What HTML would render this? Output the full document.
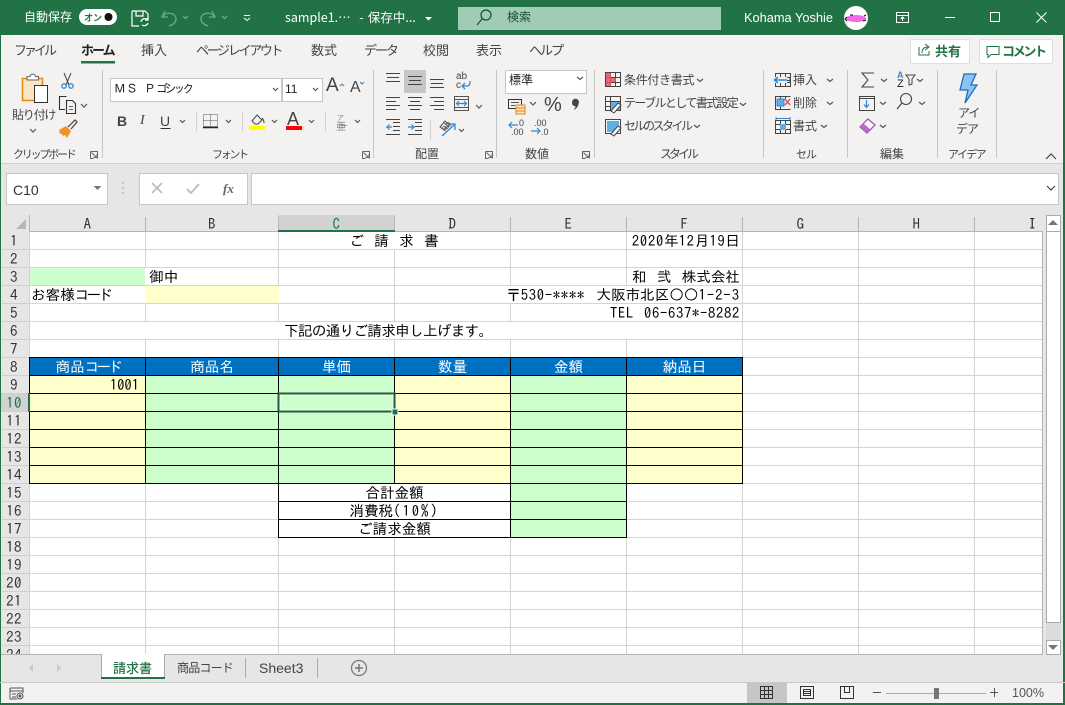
<!DOCTYPE html>
<html lang="ja"><head><meta charset="utf-8"><title>sample1</title>
<style>
html,body{margin:0;padding:0;background:#e6e6e6}
#p{position:relative;width:1065px;height:705px;overflow:hidden;background:#e6e6e6;font-family:"Liberation Sans","Noto Sans CJK JP",sans-serif}
#p div{position:absolute}
.t{white-space:nowrap;font-size:12px;line-height:16px;color:#444;font-family:"Noto Sans CJK JP",sans-serif}
.tb{font-size:13px}
.w{color:#fff}
.c{white-space:pre;font-family:"IPAGothic","Noto Sans CJK JP",monospace;font-size:14.6px;line-height:18px;height:18px;color:#000}
.h{white-space:nowrap;font-family:"IPAGothic","Noto Sans CJK JP",monospace;font-size:15px;line-height:18px;height:18px;color:#333;text-align:center;letter-spacing:.4px}
.ctr{text-align:center}.r{text-align:right}
.d{letter-spacing:.75px}.k{letter-spacing:-3px}
svg{position:absolute;left:0;top:0}
.ch{fill:none;stroke:#555;stroke-width:1.2}
</style></head><body><div id="p">
<div style="left:0;top:0;width:1065px;height:35px;background:#217346"></div>
<div style="left:0;top:35px;width:1065px;height:128px;background:#f3f2f1;border-bottom:1px solid #d2d0ce"></div>
<div style="left:458px;top:7px;width:263px;height:23px;background:#a0cbb4"></div>
<div style="left:0;top:215px;width:1065px;height:17px;background:#e6e6e6"></div>
<div style="left:0;top:232px;width:29px;height:423px;background:#e6e6e6"></div>
<div style="left:30px;top:232px;width:1012px;height:422px;background:#fff"></div>
<div style="left:6px;top:173px;width:100px;height:30px;background:#fff;border:1px solid #c6c6c6"></div>
<div style="left:139px;top:173px;width:107px;height:30px;background:#fff;border:1px solid #c6c6c6"></div>
<div style="left:251px;top:173px;width:806px;height:30px;background:#fff;border:1px solid #c6c6c6"></div>
<div style="left:278px;top:215px;width:117px;height:17px;background:#d2d2d2"></div>
<div style="left:0;top:393px;width:29px;height:18px;background:#d2d2d2"></div>
<div style="left:0;top:683px;width:1065px;height:20px;background:#f3f2f1"></div>
<div style="left:747px;top:683px;width:40px;height:20px;background:#c8c6c4"></div>
<div style="left:101px;top:654px;width:64px;height:25px;background:#fff"></div>
<div style="left:404px;top:70px;width:22px;height:23px;background:#c8c6c4"></div>
<div style="left:110px;top:78px;width:170px;height:22px;background:#fff;border:1px solid #c8c6c4"></div>
<div style="left:282px;top:78px;width:39px;height:22px;background:#fff;border:1px solid #c8c6c4"></div>
<div style="left:505px;top:70px;width:80px;height:22px;background:#fff;border:1px solid #c8c6c4"></div>
<div style="left:910px;top:39px;width:58px;height:23px;background:#fff;border:1px solid #e1dfdd;border-radius:2px"></div>
<div style="left:979px;top:39px;width:72px;height:23px;background:#fff;border:1px solid #e1dfdd;border-radius:2px"></div>
<div style="left:1046px;top:215px;width:15px;height:440px;background:#dcdcdc"></div>
<div style="left:1046px;top:215px;width:13px;height:15px;background:#fff;border:1px solid #ababab"></div>
<div style="left:1046px;top:231px;width:13px;height:390px;background:#fff;border:1px solid #ababab"></div>
<div style="left:1046px;top:640px;width:13px;height:13px;background:#fff;border:1px solid #ababab"></div>

<!-- sheet fills -->
<div style="left:30px;top:267px;width:115px;height:18px;background:#ccffcc"></div>
<div style="left:145px;top:285px;width:134px;height:18px;background:#ffffcc"></div>
<div style="left:29px;top:357px;width:714px;height:18px;background:#0070c0"></div>
<div style="left:29px;top:375px;width:116px;height:108px;background:#ffffcc"></div>
<div style="left:145px;top:375px;width:249px;height:108px;background:#ccffcc"></div>
<div style="left:394px;top:375px;width:116px;height:108px;background:#ffffcc"></div>
<div style="left:510px;top:375px;width:116px;height:162px;background:#ccffcc"></div>
<div style="left:626px;top:375px;width:117px;height:108px;background:#ffffcc"></div>

<svg width="1065" height="705" viewBox="0 0 1065 705" fill="none" shape-rendering="auto">
<g stroke="#d4d4d4" shape-rendering="crispEdges">
<path d="M29.5 232V654M858.5 232V654M974.5 232V654M742.5 232V654"/>
<path d="M145.5 232V267M145.5 303V321M145.5 339V357M145.5 483V654M278.5 232V285M278.5 303V321M278.5 339V357M278.5 537V654"/>
<path d="M394.5 249V321M394.5 339V357M394.5 537V654M510.5 232V285M510.5 303V321M510.5 339V357M510.5 537V654M626.5 232V285M626.5 339V357M626.5 537V654"/>
<path d="M30 249.500H1042M30 267.500H1042M30 285.500H1042M30 303.500H1042M30 321.500H1042M30 339.500H1042M743 357.500H1042M743 375.500H1042M743 393.500H1042M743 411.500H1042M743 429.500H1042M743 447.500H1042M743 465.500H1042M30 483.500H278M743 483.500H1042M30 501.500H278M627 501.500H1042M30 519.500H278M627 519.500H1042M30 537.500H1042M30 555.500H1042M30 573.500H1042M30 591.500H1042M30 609.500H1042M30 627.500H1042M30 645.500H1042"/>
</g>
<g stroke="#000" shape-rendering="crispEdges">
<path d="M29 357.500H743M29 375.500H743M29 393.500H743M29 411.500H743M29 429.500H743M29 447.500H743M29 465.500H743M29 483.500H743M278 501.500H627M278 519.500H627M278 537.500H627"/>
<path d="M29.500 357V484M145.500 357V484M278.500 357V538M394.500 357V484M510.500 357V538M626.500 357V538M742.500 357V484"/>
</g>
<!-- header lines -->
<g stroke="#b5b5b5" shape-rendering="crispEdges">
<path d="M29.500 215V232M145.500 217V231M278.500 217V231M394.500 217V231M510.500 217V231M626.500 217V231M742.500 217V231M858.500 217V231M974.500 217V231"/>
<path d="M29 231.500H1043M1042.500 232V654"/>
<path d="M0 654.500H101M165 654.500H1043"/>
<path d="M2 249.500H29M2 267.500H29M2 285.500H29M2 303.500H29M2 321.500H29M2 339.500H29M2 357.500H29M2 375.500H29M2 393.500H29M2 411.500H29M2 429.500H29M2 447.500H29M2 465.500H29M2 483.500H29M2 501.500H29M2 519.500H29M2 537.500H29M2 555.500H29M2 573.500H29M2 591.500H29M2 609.500H29M2 627.500H29M2 645.500H29" stroke="#cfcfcf"/>
</g>
<path d="M278 231H395" stroke="#217346" stroke-width="2" shape-rendering="crispEdges"/>
<path d="M29 393V412" stroke="#217346" stroke-width="2" shape-rendering="crispEdges"/>
<path d="M16 229h10v-10z" fill="#b8b8b8"/>
<!-- selection -->
<rect x="278.500" y="393.500" width="116" height="18" stroke="#1c5f3a" stroke-width="2" shape-rendering="crispEdges"/>
<rect x="280" y="395" width="113" height="15" stroke="#fff" stroke-width="1" shape-rendering="crispEdges"/>
<rect x="392" y="409" width="6" height="6" fill="#217346" stroke="#fff"/>

<!-- window border -->
<path d="M0 35V705M1064 35V705" stroke="#217346" stroke-width="2" shape-rendering="crispEdges"/>
<path d="M0 704H1065" stroke="#217346" stroke-width="2" shape-rendering="crispEdges"/>

<!-- title bar -->
<rect x="79" y="9" width="38" height="16" rx="8" fill="#fff"/>
<circle cx="108.500" cy="17" r="4" fill="#111"/>
<g stroke="#fff" stroke-width="1.200">
<path d="M132 11h13l3 3v6M132 11v15h7"/><path d="M136 11v5h7v-5"/>
<path d="M141 22a4 4 0 0 1 7-2M148 17v3h-3M148 23a4 4 0 0 1-6 2"/>
</g>
<g stroke="#6fa98a" stroke-width="1.300">
<path d="M165 11l-3 6h6M163 16c4-5 13-3 13 3 0 4-4 6-7 7"/><path d="M183 16l2.500 2.500 2.500-2.500"/>
<path d="M212 11l3 6h-6M214 16c-4-5-13-3-13 3 0 4 4 6 7 7"/><path d="M222 16l2.500 2.500 2.500-2.500"/>
</g>
<path d="M244 15.500h6M244 18l3 2.500 3-2.500" stroke="#fff" stroke-width="1"/>
<path d="M425 17h7l-3.500 3.500z" fill="#fff"/>
<g stroke="#174f31" stroke-width="1.200"><circle cx="486" cy="15" r="5"/><path d="M482 19l-5 6"/></g>
<circle cx="856" cy="18" r="12" fill="#fff"/>
<ellipse cx="856" cy="18.500" rx="10" ry="3.500" fill="#f06be8"/><path d="M847 17l-2 2 2 2M850 15h3M864 16l2-1M866 20l-3 1" stroke="#111"/>
<g stroke="#fff" stroke-width="1" shape-rendering="crispEdges">
<path d="M896.500 12.500h12v10h-12zM896 15.500h13"/><path d="M902.500 21V17M900.500 19l2-2 2 2"/>
<path d="M945 17.500h10"/><rect x="990.500" y="12.500" width="9" height="9"/>
</g>
<path d="M1036.500 12.500l10 10M1046.500 12.500l-10 10" stroke="#fff" stroke-width="1"/>

<!-- tab underline -->
<rect x="81" y="61" width="34" height="2.500" fill="#217346"/>
<g stroke="#217346" stroke-width="1">
<path d="M919 47v8h10v-4M922 53c0-4 2-6 6-6M925 44l4 3-4 3"/>
<path d="M987 46.500h12v8h-8l-3 3v-3h-1z"/>
</g>

<!-- group separators -->
<path d="M102.500 70V158M373.500 70V158M496.500 70V158M594.500 70V158M763.500 70V158M847.500 70V158M937.500 70V158M996.500 70V158" stroke="#c8c6c4" shape-rendering="crispEdges"/>
<path d="M196.500 112V132M242.500 112V132M325.500 112V132M430.500 120V140" stroke="#d2d0ce" shape-rendering="crispEdges"/>

<!-- launchers -->
<g stroke="#666" stroke-width="1">
<path d="M90.500 151.500h7v7M90.500 151.500v7h3M91.500 152.500l5 5M97 154v3.500h-3.500"/>
<path d="M362.500 151.500h7v7M362.500 151.500v7h3M363.500 152.500l5 5M369 154v3.500h-3.500"/>
<path d="M485.500 151.500h7v7M485.500 151.500v7h3M486.500 152.500l5 5M492 154v3.500h-3.500"/>
<path d="M582.500 151.500h7v7M582.500 151.500v7h3M583.500 152.500l5 5M589 154v3.500h-3.500"/>
</g>
<path d="M1046 159l5-5 5 5" stroke="#444" stroke-width="1.200"/>

<!-- clipboard -->
<path d="M22.500 78.500h20v22h-20z" fill="#fbe5c3" stroke="#e08a14" stroke-width="1.500"/>
<path d="M27 78.500v-2h3c.5-3 5-3 5.500 0h3v3.500h-11.500z" fill="#fff" stroke="#666"/>
<rect x="34.500" y="85.500" width="13" height="17" fill="#fff" stroke="#333"/>
<path d="M30 129l3 3 3-3M81 104l3 3 3-3" class="ch"/>
<g stroke="#444"><path d="M64 73l5 12M71 73l-5 12"/></g>
<g stroke="#2b88d8" stroke-width="1.300"><circle cx="64" cy="86" r="2.200"/><circle cx="71" cy="86" r="2.200"/></g>
<path d="M65 109.500h-5.500v-13h7M66.500 100.500h6l3 3v10h-9z" stroke="#333" stroke-width="1.100"/><path d="M69 106.500h4M69 109.500h4" stroke="#666"/>
<path d="M59 130l7-4 5 5-4 7-2-3-2 1-1-2-2 0z" fill="#f0922b"/><path d="M68 127l7-7 2 2-6 7" stroke="#444" stroke-width="1.200"/>

<!-- font group -->
<g class="ch">
<path d="M273 88l2.500 2.500 2.500-2.500M313 88l2.500 2.500 2.500-2.500M180 120l2.500 2.500 2.500-2.500M226 120l2.500 2.500 2.500-2.500M272 120l2.500 2.500 2.500-2.500M309 120l2.500 2.500 2.500-2.500M355 120l2.500 2.500 2.500-2.500"/>
</g>
<path d="M340 86l2-2 2 2M360 82l2 2 2-2" stroke="#2b88d8" stroke-width="1"/>
<path d="M160.500 128.500h10" stroke="#333"/>
<path d="M203.500 114.500h14v12h-14zM210.500 114.500v12M203.500 120.500h14" stroke="#555" stroke-dasharray="1 1" shape-rendering="crispEdges"/><path d="M203 127.500h15" stroke="#222" stroke-width="1.500"/>
<rect x="249" y="126" width="16" height="4" fill="#ffff00"/>
<path d="M252 121l5-6 5 5-4 4h-3z" stroke="#444"/><path d="M262 118c2 2 2 4 2 5" stroke="#444"/>
<rect x="286" y="126" width="16" height="4" fill="#ff0000"/>
<path d="M339 125.500h8" stroke="#999"/>

<!-- align -->
<g stroke="#444" shape-rendering="crispEdges">
<path d="M386 73.500h14M387 77.500h12M386 81.500h14"/>
<path d="M408 76.500h14M409 80.500h12M408 84.500h14"/>
<path d="M430 79.500h14M431 83.500h12M430 87.500h14"/>
<path d="M386 98.500h14M386 102.500h10M386 106.500h14M386 110.500h10" transform="translate(0,-1)"/>
<path d="M408 97.500h14M410 101.500h10M408 105.500h14M410 109.500h10"/>
<path d="M430 97.500h14M434 101.500h10M430 105.500h14M434 109.500h10"/>
<path d="M393 122.500h7M393 126.500h7M393 130.500h7M386 134.500h14M386 119.500h14"/>
<path d="M415 122.500h7M415 126.500h7M415 130.500h7M408 134.500h14M408 119.500h14"/>
</g>
<path d="M392 127h-5l2.500-2.500M387 127l2.500 2.500M408 127h6l-2.500-2.500M414 127l-2.500 2.500" stroke="#2b88d8" stroke-width="1.200"/>
<path d="M470 81v2a3 3 0 0 1-3 3h-4M465 83l-3 3 3 3" stroke="#2b88d8" stroke-width="1.300"/>
<rect x="454.500" y="96.500" width="14" height="14" stroke="#555"/><path d="M454 99.500h15M454 107.500h15" stroke="#555"/><path d="M457 103.500h9M459 101l-2.500 2.500 2.500 2.500M464 101l2.500 2.500-2.500 2.500" stroke="#2b88d8" stroke-width="1.200"/>
<path d="M476 105l3 3 3-3M459 129l2.500 2.500 2.500-2.500M530 102l3 3 3-3M697 79l3 2.500 3-2.500M740 103l3 2.500 3-2.500M694 125l3 2.500 3-2.500M827 79l3 2.500 3-2.500M827 102l3 2.500 3-2.500M821 125l3 2.500 3-2.500M881 79l3 2.500 3-2.500M917 79l3 2.500 3-2.500M880 102l3 2.500 3-2.500M919 102l3 2.500 3-2.500M880 125l3 2.500 3-2.500M577 77l3 2.500 3-2.500" class="ch"/>
<path d="M442 136l12-11M449 124l6 0 0 6" stroke="#2b88d8" stroke-width="1.300"/>
<path d="M440 127l5-6 4 4-5 5z" stroke="#555"/>

<!-- number -->
<rect x="508.500" y="99.500" width="13" height="9" stroke="#333"/>
<path d="M511 102.500h8M511 105.500h4" stroke="#555"/><path d="M516 105h9v9h-9z" fill="#f8e3c8" stroke="#e08a14"/><path d="M516 108h9M516 111h9" stroke="#e08a14"/>
<path d="M518 125h-9M512 122l-3 3 3 3M531 131h9M537 128l3 3-3 3" stroke="#2b88d8" stroke-width="1.200"/>
<path d="M572 102a3.500 3.500 0 1 1 6.500 2c-.5 3-2.500 5-5 6 1.500-1.500 2-3 2-4-2 .5-3.500-1-3.500-4z" fill="#444"/>

<!-- style icons -->
<g stroke="#444" shape-rendering="crispEdges">
<rect x="605.500" y="72.500" width="15" height="14"/><path d="M610.500 72v15M615.500 72v15M605 77.500h16M605 82.500h16"/>
<rect x="605.500" y="96.500" width="15" height="14"/><path d="M610.500 96v15M605 101.500h16M605 106.500h16"/>
<rect x="605.500" y="119.500" width="15" height="14"/>
</g>
<path d="M606 73h5v5h5v4h-5v4h-5z" fill="#e8525a" opacity=".85"/>
<path d="M611 102h9v8h-9z" fill="#62aee6"/><path d="M607 121h12v11h-12z" fill="#62aee6"/>
<path d="M611 111l7-8 3 2-7 8zM611 134l7-8 3 2-7 8z" fill="#fff" stroke="#444"/>

<!-- cells -->
<g stroke="#444" shape-rendering="crispEdges">
<rect x="775.500" y="73.500" width="15" height="13"/><path d="M780.500 73v14M785.500 73v14M775 80.500h16"/>
<path d="M775.500 96.500h15M775.500 109.500h15M775.500 96v14M780.500 96v14M785.500 96v3"/>
<rect x="775.500" y="120.500" width="15" height="13"/><path d="M780.500 120v14M785.500 120v14M775 124.500h16M775 129.500h16"/>
</g>
<path d="M773 77h14v6h-14z" fill="#f3f2f1"/><path d="M787 80h-13M778 77l-3.500 3 3.500 3" stroke="#2b88d8" stroke-width="1.500"/><path d="M787 77.500h3v5h-3" stroke="#444"/>
<rect x="777" y="99" width="7" height="7" fill="#62aee6" stroke="#2b88d8"/><path d="M785 99l5 6M790 99l-5 6" stroke="#e8525a" stroke-width="1.500"/>
<rect x="780" y="124" width="6" height="6" fill="#62aee6"/><path d="M776 118.500h14M776 117v3M790 117v3" stroke="#2b88d8"/>

<!-- edit -->
<path d="M874 73h-12l6 7-6 7h12" stroke="#444" stroke-width="1.100"/>
<path d="M906 75h9l-3 4v5l-3 1v-6z" stroke="#444"/>
<rect x="859.500" y="96.500" width="15" height="14" stroke="#444" shape-rendering="crispEdges"/><path d="M859 98.500h16" stroke="#444"/><path d="M866.500 100v7M864 104.500l2.500 3 2.500-3" stroke="#2b88d8" stroke-width="1.200"/>
<circle cx="906" cy="99" r="5.500" stroke="#444" stroke-width="1.100"/><path d="M902 103l-5 6" stroke="#444" stroke-width="1.200"/>
<path d="M860 127l8-8 7 6-8 8z" fill="#fff" stroke="#a347b8" stroke-width="1.200"/><path d="M860 127l3.500-3.500 7 6-3.500 3.500z" fill="#b86bcb"/>
<path d="M964 74h12l-5 11h6l-12 18 3-13h-8z" fill="#8cc3f0" stroke="#1b6ec2" stroke-width="1.300"/>

<!-- formula bar -->
<path d="M93.500 186h8l-4 4z" fill="#777"/>
<path d="M123 182v1.500M123 187v1.500M123 192v1.500" stroke="#aaa" stroke-width="1.500"/>
<path d="M152 183l10 10M162 183l-10 10" stroke="#bbb" stroke-width="1.600"/>
<path d="M187 189l4 4 8-9" stroke="#bbb" stroke-width="1.800"/>
<path d="M1047 186l4 4 4-4" stroke="#444" stroke-width="1.200"/>
<path d="M1049 225h10l-5-5z" fill="#777" transform="translate(-1 0)"/><path d="M1048 645h10l-5 5z" fill="#777"/>

<!-- sheet tabs -->
<rect x="101" y="677" width="64" height="2" fill="#217346"/>
<path d="M101.500 654v23M164.500 654v23" stroke="#aaa" shape-rendering="crispEdges"/>
<path d="M245.500 658v20M317.500 658v20" stroke="#aaa" shape-rendering="crispEdges"/>
<path d="M33 664l-4 4 4 4zM57 664l4 4-4 4z" fill="#c8c8c8"/>
<circle cx="359" cy="668" r="7.500" stroke="#777" stroke-width="1.200"/><path d="M355 668h8M359 664v8" stroke="#777" stroke-width="1.500"/>
<path d="M0 682.500H1065" stroke="#c8c8c8" shape-rendering="crispEdges"/>

<!-- status -->
<path d="M10 688h13v5M10 688v11h7M10 691h13M12 694h4M12 697h4" stroke="#555"/><circle cx="20" cy="696" r="3" stroke="#555"/><circle cx="20" cy="696" r="1.500" fill="#555"/>
<g stroke="#333" shape-rendering="crispEdges">
<rect x="760.500" y="686.500" width="12" height="12"/><path d="M764.500 686v13M768.500 686v13M760 690.500h13M760 694.500h13"/>
<rect x="800.500" y="686.500" width="13" height="12"/><rect x="803.500" y="689.500" width="7" height="6"/><path d="M804 691.500h6M804 693.500h6"/>
<path d="M840.500 686.500h13v12h-13zM844.500 686v7M849.500 686v7M844.500 692.500h5"/>
<path d="M873 692.500h8M990 692.500h8M994.500 688v9" stroke="#555"/>
<path d="M886 693.500h100" stroke="#aaa"/>
</g>
<rect x="934" y="688" width="5" height="11" fill="#777"/>
</svg>

<!-- title text -->
<div class="t w" style="left:24px;top:9px;font-size:12px">自動保存</div>
<div class="t" style="left:84px;top:10px;font-size:9px;color:#217346;font-weight:700">オン</div>
<div class="t w" style="left:285px;top:9px;font-size:12.500px;word-spacing:1.500px">sample1.⋯&nbsp; - 保存中... </div>
<div class="t" style="left:507px;top:9px;font-size:12px;color:#174f31">検索</div>
<div class="t w" style="left:744px;top:10px;font-size:12.800px;font-family:'Liberation Sans',sans-serif">Kohama Yoshie</div>

<!-- tabs -->
<div class="t tb" style="left:14px;top:42px;letter-spacing:-3px">ファイル</div>
<div class="t tb" style="left:81px;top:42px;font-weight:700;color:#222;letter-spacing:-2px">ホーム</div>
<div class="t tb" style="left:141px;top:42px">挿入</div>
<div class="t tb" style="left:196px;top:42px;letter-spacing:-2.400px">ページ レイアウト</div>
<div class="t tb" style="left:311px;top:42px">数式</div>
<div class="t tb" style="left:364px;top:42px;letter-spacing:-2px">データ</div>
<div class="t tb" style="left:423px;top:42px">校閲</div>
<div class="t tb" style="left:476px;top:42px">表示</div>
<div class="t tb" style="left:529px;top:42px;letter-spacing:-2px">ヘルプ</div>
<div class="t tb" style="left:935px;top:43px;font-weight:700;color:#217346">共有</div>
<div class="t tb" style="left:1002px;top:43px;font-weight:700;color:#217346;letter-spacing:-2.300px">コメント</div>

<!-- ribbon text -->
<div class="t" style="left:12px;top:107px;letter-spacing:-1.200px">貼り付け</div>
<div class="t" style="left:114px;top:81px;font-family:'IPAGothic','Noto Sans CJK JP',sans-serif;color:#222">ＭＳ Ｐ<span style="letter-spacing:-3.200px">ゴシック</span></div>
<div class="t" style="left:285px;top:81px;color:#222;font-family:'Liberation Sans',sans-serif">11</div>
<div class="t" style="left:326px;top:78px;font-size:19px;font-family:'Liberation Sans',sans-serif">A</div>
<div class="t" style="left:350px;top:80px;font-size:16px;font-family:'Liberation Sans',sans-serif">A</div>
<div class="t" style="left:117px;top:113px;font-size:14px;font-weight:700;font-family:'Liberation Sans',sans-serif">B</div>
<div class="t" style="left:140px;top:113px;font-size:14px;font-style:italic;font-family:'Liberation Serif',serif">I</div>
<div class="t" style="left:160px;top:113px;font-size:14px;font-family:'Liberation Sans',sans-serif">U</div>
<div class="t" style="left:287px;top:111px;font-size:18px;font-family:'Liberation Sans',sans-serif">A</div>
<div class="t" style="left:337px;top:110px;font-size:7px;color:#888">ア</div>
<div class="t" style="left:336px;top:118px;font-size:10px;color:#888">亜</div>
<div class="t" style="left:456px;top:72px;font-size:10px;line-height:10px;font-family:'Liberation Sans',sans-serif">ab</div>
<div class="t" style="left:456px;top:81px;font-size:10px;line-height:10px;font-family:'Liberation Sans',sans-serif">c</div>
<div class="t" style="left:441px;top:118px;font-size:9px;transform:rotate(-45deg);font-family:'Liberation Sans',sans-serif">ab</div>
<div class="t" style="left:509px;top:72px;color:#222">標準</div>
<div class="t" style="left:544px;top:95px;font-size:20px;line-height:20px;font-family:'Liberation Sans',sans-serif">%</div>
<div class="t" style="left:519px;top:119px;font-size:9px;line-height:9px;font-family:'Liberation Sans',sans-serif">0</div>
<div class="t" style="left:511px;top:128px;font-size:9px;line-height:9px;font-family:'Liberation Sans',sans-serif">.00</div>
<div class="t" style="left:534px;top:119px;font-size:9px;line-height:9px;font-family:'Liberation Sans',sans-serif">.00</div>
<div class="t" style="left:541px;top:128px;font-size:9px;line-height:9px;font-family:'Liberation Sans',sans-serif">.0</div>
<div class="t" style="left:624px;top:72px;letter-spacing:-.3px">条件付き書式</div>
<div class="t" style="left:624px;top:95px;letter-spacing:-1.600px">テーブルとして書式設定</div>
<div class="t" style="left:624px;top:118px;letter-spacing:-2.500px">セルのスタイル</div>
<div class="t" style="left:793px;top:72px">挿入</div>
<div class="t" style="left:793px;top:95px">削除</div>
<div class="t" style="left:793px;top:118px">書式</div>
<div class="t" style="left:897px;top:70px;font-size:9px;line-height:10px;color:#2b88d8;font-weight:700;font-family:'Liberation Sans',sans-serif">A</div>
<div class="t" style="left:897px;top:79px;font-size:11px;line-height:10px;color:#222;font-family:'Liberation Sans',sans-serif">Z</div>
<div class="t" style="left:958px;top:105px;letter-spacing:-1px">アイ</div>
<div class="t" style="left:956px;top:121px;letter-spacing:-1px">デア</div>
<div class="t" style="left:13px;top:146px;font-size:11px;letter-spacing:-2.200px">クリップボード</div>
<div class="t" style="left:212px;top:146px;font-size:11px;letter-spacing:-2.300px">フォント</div>
<div class="t" style="left:415px;top:146px">配置</div>
<div class="t" style="left:525px;top:146px">数値</div>
<div class="t" style="left:660px;top:146px;letter-spacing:-3px">スタイル</div>
<div class="t" style="left:796px;top:146px;font-size:11px;letter-spacing:-1px">セル</div>
<div class="t" style="left:880px;top:146px">編集</div>
<div class="t" style="left:948px;top:146px;font-size:11px;letter-spacing:-1.600px">アイデア</div>

<!-- formula -->
<div class="t" style="left:13px;top:182px;font-size:14px;color:#333;font-family:'Liberation Sans',sans-serif">C10</div>
<div class="t" style="left:223px;top:181px;font-size:13px;font-style:italic;font-weight:700;color:#666;font-family:'Liberation Serif',serif">fx</div>

<!-- col headers -->
<div class="h" style="left:30px;top:215px;width:115px">A</div>
<div class="h" style="left:146px;top:215px;width:132px">B</div>
<div class="h" style="left:279px;top:215px;width:115px;color:#217346">C</div>
<div class="h" style="left:395px;top:215px;width:115px">D</div>
<div class="h" style="left:511px;top:215px;width:115px">E</div>
<div class="h" style="left:627px;top:215px;width:115px">F</div>
<div class="h" style="left:743px;top:215px;width:115px">G</div>
<div class="h" style="left:859px;top:215px;width:115px">H</div>
<div class="h" style="left:975px;top:215px;width:115px">I</div>
<!-- row headers -->
<div class="h" style="left:0;top:232px;width:28px">1</div>
<div class="h" style="left:0;top:250px;width:28px">2</div>
<div class="h" style="left:0;top:268px;width:28px">3</div>
<div class="h" style="left:0;top:286px;width:28px">4</div>
<div class="h" style="left:0;top:304px;width:28px">5</div>
<div class="h" style="left:0;top:322px;width:28px">6</div>
<div class="h" style="left:0;top:340px;width:28px">7</div>
<div class="h" style="left:0;top:358px;width:28px">8</div>
<div class="h" style="left:0;top:376px;width:28px">9</div>
<div class="h" style="left:0;top:394px;width:28px;color:#217346">10</div>
<div class="h" style="left:0;top:412px;width:28px">11</div>
<div class="h" style="left:0;top:430px;width:28px">12</div>
<div class="h" style="left:0;top:448px;width:28px">13</div>
<div class="h" style="left:0;top:466px;width:28px">14</div>
<div class="h" style="left:0;top:484px;width:28px">15</div>
<div class="h" style="left:0;top:502px;width:28px">16</div>
<div class="h" style="left:0;top:520px;width:28px">17</div>
<div class="h" style="left:0;top:538px;width:28px">18</div>
<div class="h" style="left:0;top:556px;width:28px">19</div>
<div class="h" style="left:0;top:574px;width:28px">20</div>
<div class="h" style="left:0;top:592px;width:28px">21</div>
<div class="h" style="left:0;top:610px;width:28px">22</div>
<div class="h" style="left:0;top:628px;width:28px">23</div>
<div style="left:0;top:646px;width:28px;height:8px;overflow:hidden"><div class="h" style="left:0;top:0;width:28px">24</div></div>

<!-- cells -->
<div class="c ctr" style="left:278px;top:232px;width:232px;word-spacing:3px">ご 請 求 書</div>
<div class="c r" style="left:600px;top:232px;width:140px"><span class="d">2020</span>年<span class="d">12</span>月<span class="d">19</span>日</div>
<div class="c" style="left:149px;top:268px">御中</div>
<div class="c r" style="left:600px;top:268px;width:140px;word-spacing:3px">和 弐 株式会社</div>
<div class="c" style="left:31px;top:286px">お客様<span class="k">コード</span></div>
<div class="c r" style="left:440px;top:286px;width:300px;word-spacing:4px">〒<span class="d">530-****</span> 大阪市北区○○<span style="letter-spacing:1px">1-2-3</span></div>
<div class="c r" style="left:560px;top:304px;width:180px;letter-spacing:.7px;word-spacing:2px">TEL 06-637*-8282</div>
<div class="c" style="left:284px;top:322px;letter-spacing:-.7px">下記の通りご請求申し上げます。</div>
<div class="c ctr" style="left:30px;top:358px;width:115px;color:#fff">商品<span class="k">コード</span></div>
<div class="c ctr" style="left:146px;top:358px;width:132px;color:#fff">商品名</div>
<div class="c ctr" style="left:279px;top:358px;width:115px;color:#fff">単価</div>
<div class="c ctr" style="left:395px;top:358px;width:115px;color:#fff">数量</div>
<div class="c ctr" style="left:511px;top:358px;width:115px;color:#fff">金額</div>
<div class="c ctr" style="left:627px;top:358px;width:115px;color:#fff">納品日</div>
<div class="c r" style="left:80px;top:376px;width:59px">1001</div>
<div class="c ctr" style="left:279px;top:484px;width:231px">合計金額</div>
<div class="c ctr" style="left:279px;top:502px;width:231px">消費税<span style="letter-spacing:2px">(10%)</span></div>
<div class="c ctr" style="left:279px;top:520px;width:231px">ご請求金額</div>

<!-- sheet tabs -->
<div class="t" style="left:113px;top:660px;font-size:13px;color:#217346;font-weight:500">請求書</div>
<div class="t" style="left:177px;top:660px;font-size:12px;letter-spacing:-.8px">商品コード</div>
<div class="t" style="left:259px;top:660px;font-size:14px;font-family:'Liberation Sans',sans-serif">Sheet3</div>
<div class="t" style="left:1012px;top:685px;font-size:12.500px;color:#555;font-family:'Liberation Sans',sans-serif">100%</div>
</div></body></html>
